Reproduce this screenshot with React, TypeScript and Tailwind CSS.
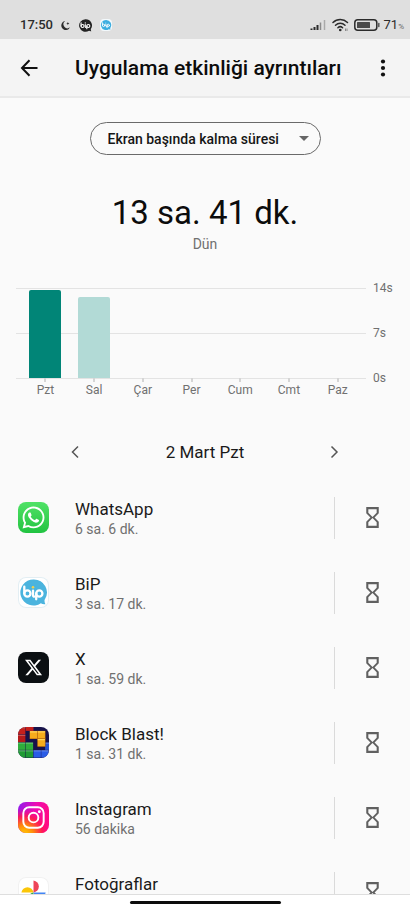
import { useState } from "react";
import type { ReactNode } from "react";
import { MdHourglassEmpty } from "react-icons/md";
import { FaWhatsapp, FaXTwitter } from "react-icons/fa6";

type DayUsage = {
  label: string;
  hours: number;
};

type AppUsage = {
  name: string;
  duration: string;
  icon: ReactNode;
};

const MAX_HOURS = 14;

const days: DayUsage[] = [
  { label: "Pzt", hours: 13.7 },
  { label: "Sal", hours: 12.6 },
  { label: "Çar", hours: 0 },
  { label: "Per", hours: 0 },
  { label: "Cum", hours: 0 },
  { label: "Cmt", hours: 0 },
  { label: "Paz", hours: 0 },
];

function BipBubble({ color, dot }: { color: string; dot: string }) {
  return (
    <>
      <path
        d="M16 2.5a13.5 13.5 0 1 0 7.6 24.6c1.4.9 3 1.2 4.7.9-.8-1.4-1.1-2.8-.9-4.3A13.5 13.5 0 0 0 16 2.5z"
        fill={color}
      />
      <g fill="none" stroke="#fff" strokeWidth="2.4" strokeLinecap="round">
        <path d="M6.500 10v7" />
        <circle cx="9.700" cy="17" r="3.200" />
        <path d="M15.500 14v4.500c0 1 .5 1.700 1.500 1.700" />
        <circle cx="22" cy="17" r="3.200" />
        <path d="M18.800 17v6" />
      </g>
      <circle cx="15.500" cy="10.500" r="1.300" fill={dot} />
    </>
  );
}

function WhatsAppIcon() {
  return (
    <span className="flex size-[31px] items-center justify-center rounded-lg bg-linear-to-b from-[#4fe266] to-[#20c341] text-white">
      <FaWhatsapp size={25} />
    </span>
  );
}

function BipIcon() {
  return (
    <svg
      viewBox="0 0 32 32"
      className="size-[31px] rounded-lg bg-white ring-1 ring-[#e3eef3] ring-inset"
    >
      <BipBubble color="#4bb4de" dot="#f5d04c" />
    </svg>
  );
}

function XIcon() {
  return (
    <span className="flex size-[31px] items-center justify-center rounded-lg bg-[#0b0f12] text-white">
      <FaXTwitter size={19} />
    </span>
  );
}

function BlockBlastIcon() {
  const cells = [
    { x: 0, y: 0, fill: "#c5201c" },
    { x: 0, y: 8, fill: "#b51a1a" },
    { x: 0, y: 16, fill: "#2fae3c" },
    { x: 8, y: 16, fill: "#2fae3c" },
    { x: 0, y: 24, fill: "#1f9a35" },
    { x: 8, y: 24, fill: "#1f9a35" },
    { x: 16, y: 24, fill: "#2a5ce6" },
    { x: 24, y: 24, fill: "#2a5ce6" },
    { x: 28, y: 16, fill: "#2450cf" },
  ];
  const gold = [
    { x: 12, y: 4 },
    { x: 20, y: 4 },
    { x: 20, y: 12 },
  ];

  return (
    <svg viewBox="0 0 32 32" className="size-[31px] rounded-lg">
      <rect width="32" height="32" fill="#17124a" />
      <rect x="8" y="0" width="8" height="4" fill="#c5201c" />
      {cells.map((cell) => (
        <g key={`${cell.x}-${cell.y}`}>
          <rect x={cell.x} y={cell.y} width="7.6" height="7.6" fill={cell.fill} />
          <path
            d={`M${cell.x} ${cell.y + 0.6}h7.6`}
            stroke="#fff"
            strokeOpacity="0.25"
            strokeWidth="1.2"
          />
        </g>
      ))}
      {gold.map((cell) => (
        <g key={`${cell.x}-${cell.y}`}>
          <rect x={cell.x} y={cell.y} width="8.4" height="8.4" fill="#b86a0c" />
          <rect x={cell.x + 0.4} y={cell.y + 0.4} width="7.4" height="7.4" fill="#f6ac1c" />
          <path
            d={`M${cell.x + 0.4} ${cell.y + 1}h7.4`}
            stroke="#ffd65c"
            strokeWidth="1.2"
          />
        </g>
      ))}
    </svg>
  );
}

function InstagramIcon() {
  return (
    <svg viewBox="0 0 32 32" className="size-[31px] rounded-lg">
      <defs>
        <linearGradient id="ig-base" x1="0" y1="0" x2="1" y2="0.3">
          <stop offset="0" stopColor="#8a1cf0" />
          <stop offset="0.55" stopColor="#ec0cb4" />
          <stop offset="1" stopColor="#ff0a86" />
        </linearGradient>
        <radialGradient id="ig-glow" cx="0.2" cy="1.05" r="0.85">
          <stop offset="0" stopColor="#ffd000" />
          <stop offset="0.35" stopColor="#ff8a0c" />
          <stop offset="0.7" stopColor="#ff1a50" stopOpacity="0.9" />
          <stop offset="1" stopColor="#ff0a86" stopOpacity="0" />
        </radialGradient>
      </defs>
      <rect width="32" height="32" fill="url(#ig-base)" />
      <rect width="32" height="32" fill="url(#ig-glow)" />
      <g fill="none" stroke="#fff" strokeWidth="2">
        <rect x="5.5" y="5.5" width="21" height="21" rx="6" />
        <circle cx="16" cy="16" r="5" />
      </g>
      <circle cx="22" cy="10" r="1.5" fill="#fff" />
    </svg>
  );
}

function PhotosIcon() {
  return (
    <svg
      viewBox="0 0 32 32"
      className="size-[31px] rounded-lg bg-white ring-1 ring-[#f1f1f1] ring-inset"
    >
      <path d="M3.500 16a6.300 6.300 0 0 1 12.500 0z" fill="#fbc608" />
      <path d="M16 3.500a6.300 6.300 0 0 1 0 12.500z" fill="#ee4458" />
      <path d="M28.500 16a6.300 6.300 0 0 1-12.500 0z" fill="#4285f4" />
      <path d="M16 28.500a6.300 6.300 0 0 1 0-12.500z" fill="#34a853" />
    </svg>
  );
}

const apps: AppUsage[] = [
  { name: "WhatsApp", duration: "6 sa. 6 dk.", icon: <WhatsAppIcon /> },
  { name: "BiP", duration: "3 sa. 17 dk.", icon: <BipIcon /> },
  { name: "X", duration: "1 sa. 59 dk.", icon: <XIcon /> },
  { name: "Block Blast!", duration: "1 sa. 31 dk.", icon: <BlockBlastIcon /> },
  { name: "Instagram", duration: "56 dakika", icon: <InstagramIcon /> },
  { name: "Fotoğraflar", duration: "", icon: <PhotosIcon /> },
];

function StatusBar() {
  return (
    <div className="flex h-[39px] shrink-0 items-end justify-between bg-[#dfdfdf] pr-1.5 pb-1.5 pl-5 text-[#2b2b2b]">
      <div className="flex items-center gap-[7px]">
        <span className="text-[13px] leading-4 font-medium">17:50</span>
        <svg viewBox="0 0 12 12" className="size-[11px]">
          <path d="M5.500 1.200A4.900 4.900 0 1 0 10.800 8 4.300 4.300 0 0 1 5.500 1.200z" fill="#2b2b2b" />
          <path d="M8.600 2.200l.5 1.200 1.200.5-1.200.5-.5 1.200-.5-1.200-1.200-.5 1.200-.5z" fill="#2b2b2b" />
        </svg>
        <svg viewBox="0 0 32 32" className="size-[15px]">
          <BipBubble color="#222" dot="#fff" />
        </svg>
        <svg viewBox="0 0 32 32" className="size-3 rounded-sm bg-[#f3f9fc]">
          <BipBubble color="#3daee0" dot="#fff" />
        </svg>
      </div>

      <div className="flex items-center">
        <svg viewBox="0 0 16 12" className="mr-1.5 h-3 w-4">
          <path d="M1.500 9.500V11M4.500 8v3M7.500 6v5" stroke="#2b2b2b" strokeWidth="2" />
          <path d="M10.500 3.500V11" stroke="#8a8a8a" strokeWidth="1.500" />
          <path d="M14.500 1v10" stroke="#a9a9a9" strokeWidth="1.500" />
        </svg>
        <svg viewBox="0 0 18 14" className="mr-1 h-3.5 w-[18px]">
          <g fill="none" stroke="#2b2b2b" strokeWidth="1.500" strokeLinecap="round">
            <path d="M1 4.500a10.500 10.500 0 0 1 14.500 0" />
            <path d="M3.500 7.200a7 7 0 0 1 9.500 0" />
            <path d="M5.900 9.700a3.500 3.500 0 0 1 4.700 0" />
          </g>
          <circle cx="8.250" cy="12" r="1.300" fill="#2b2b2b" />
          <path d="M13.500 10.500v2.500M15 10.500v2.500" stroke="#8a8a8a" strokeWidth="1" />
        </svg>
        <svg viewBox="0 0 26 12" className="mr-1 h-3 w-[26px]">
          <rect x="0.800" y="0.800" width="22" height="10.400" rx="3" fill="none" stroke="#2b2b2b" strokeWidth="1.500" />
          <rect x="3" y="3" width="13" height="6" rx="0.500" fill="#4a4a4a" />
          <path d="M24.800 4.500v3" stroke="#555" strokeWidth="1.500" strokeLinecap="round" />
        </svg>
        <span className="text-[13px] leading-4">71</span>
        <span className="self-end text-[8px] leading-3 text-[#666]">%</span>
      </div>
    </div>
  );
}

function Header() {
  return (
    <header className="flex h-[59px] shrink-0 items-center border-b-2 border-[#e9e9e9] bg-[#f4f4f4] pr-[17px] pl-[19px]">
      <button type="button" aria-label="Geri" className="mr-9">
        <svg viewBox="0 0 20 20" className="size-5" fill="none" stroke="#111" strokeWidth="2">
          <path d="M18.500 10H3.500M10.500 2.200L3 10l7.500 7.800" />
        </svg>
      </button>
      <h1 className="flex-1 text-[21px] leading-7 font-medium whitespace-nowrap text-[#0c0c0c]">
        Uygulama etkinliği ayrıntıları
      </h1>
      <button type="button" aria-label="Diğer seçenekler">
        <svg viewBox="0 0 20 20" className="size-5" fill="#111">
          <circle cx="10" cy="3.500" r="2.100" />
          <circle cx="10" cy="10" r="2.100" />
          <circle cx="10" cy="16.500" r="2.100" />
        </svg>
      </button>
    </header>
  );
}

function UsageChart({
  selected,
  onSelect,
}: {
  selected: number;
  onSelect: (index: number) => void;
}) {
  return (
    <section className="mt-[33px] flex pr-3 pl-4 text-xs text-[#707070]">
      <div className="grid flex-1">
        {/* Grid lines */}
        <div className="col-start-1 row-start-1 h-[91px]">
          <div className="h-[45px] border-t border-[#e3e3e3]" />
          <div className="h-[46px] border-y border-[#e3e3e3]" />
        </div>
        {/* Bars */}
        <div className="z-10 col-start-1 row-start-1 flex pr-1 pl-[5px]">
          {days.map((day, index) => (
            <button
              key={day.label}
              type="button"
              onClick={() => onSelect(index)}
              className="flex flex-1 flex-col items-center"
            >
              <span className="flex h-[90px] w-8 items-end">
                <span
                  className={`w-full rounded-t-xs ${
                    selected === index ? "bg-[#018577]" : "bg-[#b2dad6]"
                  }`}
                  style={{ height: `${(day.hours / MAX_HOURS) * 100}%` }}
                />
              </span>
              <span className="h-1 w-0.5 bg-[#d5d5d5]" />
              <span className="leading-4">{day.label}</span>
            </button>
          ))}
        </div>
      </div>
      <div className="-mt-2 flex h-[106px] w-8 flex-col justify-between pl-[7px] leading-4">
        <span>14s</span>
        <span>7s</span>
        <span>0s</span>
      </div>
    </section>
  );
}

function DateNav() {
  return (
    <div className="mt-[38px] flex h-8 items-center justify-between px-[66px]">
      <button type="button" aria-label="Önceki gün">
        <svg viewBox="0 0 20 20" className="size-5" fill="none" stroke="#555" strokeWidth="1.5">
          <path d="M12 4.500L6.500 10l5.500 5.500" />
        </svg>
      </button>
      <h2 className="text-[17px] leading-6 text-[#1a1a1a]">2 Mart Pzt</h2>
      <button type="button" aria-label="Sonraki gün">
        <svg viewBox="0 0 20 20" className="size-5" fill="none" stroke="#555" strokeWidth="1.5">
          <path d="M7.500 4.500l5.500 5.500-5.500 5.500" />
        </svg>
      </button>
    </div>
  );
}

function AppRow({ app }: { app: AppUsage }) {
  return (
    <li className="flex h-[75px] items-center">
      <div className="flex w-[75px] shrink-0 pl-[18px]">{app.icon}</div>
      <div className="flex-1 pt-0.5">
        <div className="text-[17px] leading-5 text-[#1a1a1a]">{app.name}</div>
        <div className="min-h-5 text-sm leading-5 text-[#707070]">{app.duration}</div>
      </div>
      <button
        type="button"
        aria-label={`${app.name} için zamanlayıcı ayarla`}
        className="flex h-[42px] w-[76px] items-center justify-center border-l border-[#dadada] text-[#606060]"
      >
        <MdHourglassEmpty size={25} />
      </button>
    </li>
  );
}

export default function App() {
  const [selectedDay, setSelectedDay] = useState(0);

  return (
    <div className="flex h-dvh flex-col overflow-hidden bg-[#fafafa] font-['Roboto',sans-serif]">
      <StatusBar />
      <Header />

      <main className="min-h-0 flex-1 overflow-y-auto pt-6 [scrollbar-width:none]">
        <div className="flex justify-center">
          <div className="grid items-center">
            <select
              aria-label="Gösterilecek veri"
              className="col-start-1 row-start-1 h-[33px] appearance-none rounded-full border border-[#6a6a6a] pr-10 pl-[17px] text-sm font-medium text-[#161616]"
            >
              <option>Ekran başında kalma süresi</option>
              <option>Alınan bildirimler</option>
              <option>Açılma sayısı</option>
            </select>
            <svg
              viewBox="0 0 10 5"
              className="pointer-events-none col-start-1 row-start-1 mr-3 h-[5px] w-2.5 justify-self-end"
            >
              <path d="M0 0h10L5 5z" fill="#666" />
            </svg>
          </div>
        </div>

        <div className="mt-[38px] text-center">
          <div className="text-[33px] leading-10 text-[#0c0c0c]">13 sa. 41 dk.</div>
          <div className="text-sm leading-[22px] text-[#707070]">Dün</div>
        </div>

        <UsageChart selected={selectedDay} onSelect={setSelectedDay} />
        <DateNav />

        <ul className="mt-3">
          {apps.map((app) => (
            <AppRow key={app.name} app={app} />
          ))}
        </ul>
      </main>

      <footer className="flex h-[17px] shrink-0 justify-center border-t border-[#dedede] bg-white pt-1.5">
        <div className="h-[3px] w-[151px] rounded-full bg-[#0c0c0c]" />
      </footer>
    </div>
  );
}
